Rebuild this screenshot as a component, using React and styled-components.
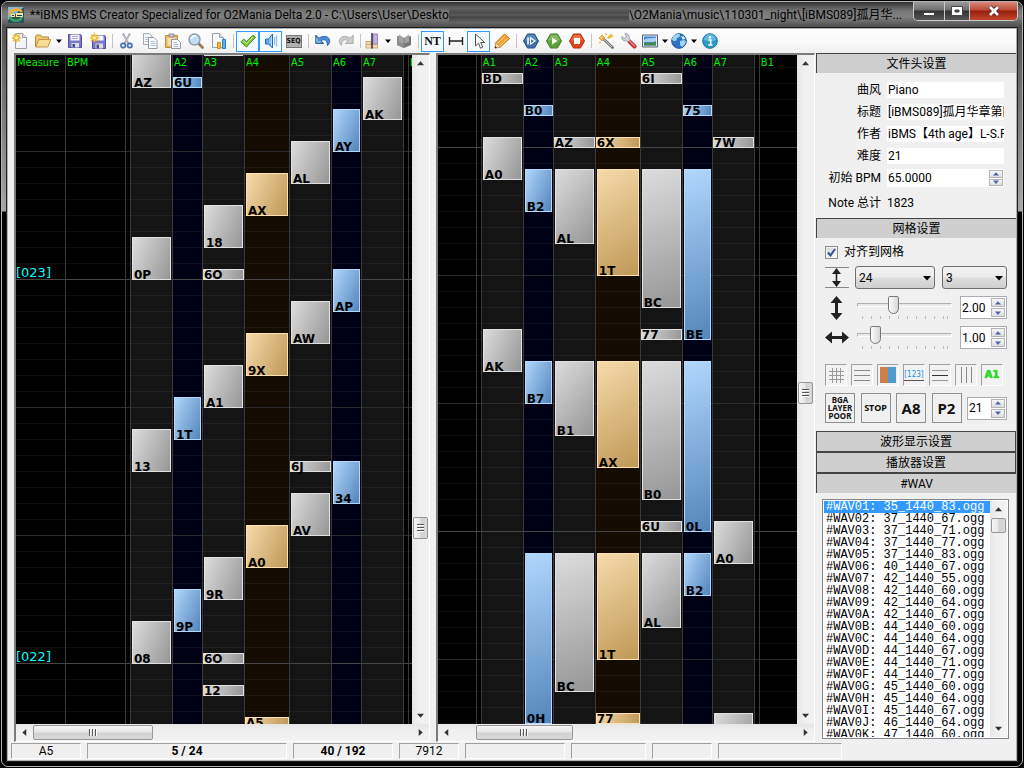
import { useState } from 'react';
import styled, { createGlobalStyle, css } from 'styled-components';

const UI_FONT = "Roboto, 'Open Sans', 'Noto Sans CJK SC', sans-serif";
const CHART_FONT = "'DejaVu Sans', 'Liberation Sans', sans-serif";

/* notes are [top, height, label], measured from the top of the chart */
const TAP = 11;

const LEFT_LANES = [
  {
    name: 'Measure',
    width: 49,
    tone: 'black',
    marks: [
      { y: 224, text: '[023]' },
      { y: 608, text: '[022]' },
    ],
  },
  { name: 'BPM', width: 60, tone: 'black' },
  { name: '', width: 5, tone: 'black' },
  {
    name: 'A1',
    width: 42,
    tone: 'gray',
    notes: [[-10, 43, 'AZ'], [182, 43, '0P'], [374, 43, '13'], [566, 43, '08']],
  },
  {
    name: 'A2',
    width: 30,
    tone: 'blue',
    notes: [[22, TAP, '6U'], [342, 43, '1T'], [534, 43, '9P']],
  },
  {
    name: 'A3',
    width: 42,
    tone: 'gray',
    notes: [
      [-42, 43, ''],
      [150, 43, '18'],
      [214, TAP, '6O'],
      [310, 43, 'A1'],
      [502, 43, '9R'],
      [598, TAP, '6O'],
      [630, TAP, '12'],
    ],
  },
  {
    name: 'A4',
    width: 45,
    tone: 'gold',
    notes: [[118, 43, 'AX'], [278, 43, '9X'], [470, 43, 'A0'], [662, TAP, 'A5']],
  },
  {
    name: 'A5',
    width: 42,
    tone: 'gray',
    notes: [[86, 43, 'AL'], [246, 43, 'AW'], [406, TAP, '6J'], [438, 43, 'AV']],
  },
  {
    name: 'A6',
    width: 30,
    tone: 'blue',
    notes: [[54, 43, 'AY'], [214, 43, 'AP'], [406, 43, '34']],
  },
  { name: 'A7', width: 42, tone: 'gray', notes: [[22, 43, 'AK']] },
  { name: '', width: 5, tone: 'black' },
  { name: 'B1', tone: 'black' },
];

const RIGHT_LANES = [
  { name: 'BPM', width: 60, tone: 'black' },
  { name: '', width: 5, tone: 'black' },
  {
    name: 'A1',
    width: 42,
    tone: 'gray',
    notes: [[18, TAP, 'BD'], [82, 43, 'A0'], [274, 43, 'AK']],
  },
  {
    name: 'A2',
    width: 30,
    tone: 'blue',
    notes: [[50, TAP, 'B0'], [114, 43, 'B2'], [306, 43, 'B7'], [498, 171, '0H']],
  },
  {
    name: 'A3',
    width: 42,
    tone: 'gray',
    notes: [[82, TAP, 'AZ'], [114, 75, 'AL'], [306, 75, 'B1'], [498, 139, 'BC']],
  },
  {
    name: 'A4',
    width: 45,
    tone: 'gold',
    notes: [
      [82, TAP, '6X'],
      [114, 107, '1T'],
      [306, 107, 'AX'],
      [498, 107, '1T'],
      [658, TAP, '77'],
    ],
  },
  {
    name: 'A5',
    width: 42,
    tone: 'gray',
    notes: [
      [18, TAP, '6I'],
      [114, 139, 'BC'],
      [274, TAP, '77'],
      [306, 139, 'B0'],
      [466, TAP, '6U'],
      [498, 75, 'AL'],
    ],
  },
  {
    name: 'A6',
    width: 30,
    tone: 'blue',
    notes: [[50, TAP, '75'], [114, 171, 'BE'], [306, 171, '0L'], [498, 43, 'B2']],
  },
  {
    name: 'A7',
    width: 42,
    tone: 'gray',
    notes: [[82, TAP, '7W'], [466, 43, 'A0'], [658, 43, '']],
  },
  { name: '', width: 5, tone: 'black' },
  { name: 'B1', tone: 'black' },
];

const WAVS = [
  '#WAV01: 35_1440_83.ogg',
  '#WAV02: 37_1440_67.ogg',
  '#WAV03: 37_1440_71.ogg',
  '#WAV04: 37_1440_77.ogg',
  '#WAV05: 37_1440_83.ogg',
  '#WAV06: 40_1440_67.ogg',
  '#WAV07: 42_1440_55.ogg',
  '#WAV08: 42_1440_60.ogg',
  '#WAV09: 42_1440_64.ogg',
  '#WAV0A: 42_1440_67.ogg',
  '#WAV0B: 44_1440_60.ogg',
  '#WAV0C: 44_1440_64.ogg',
  '#WAV0D: 44_1440_67.ogg',
  '#WAV0E: 44_1440_71.ogg',
  '#WAV0F: 44_1440_77.ogg',
  '#WAV0G: 45_1440_60.ogg',
  '#WAV0H: 45_1440_64.ogg',
  '#WAV0I: 45_1440_67.ogg',
  '#WAV0J: 46_1440_64.ogg',
  '#WAV0K: 47_1440_60.ogg',
];

const STATUS = [
  { text: 'A5', width: 70 },
  { text: '5 / 24', width: 200, bold: true },
  { text: '40 / 192', width: 100, bold: true },
  { text: '7912', width: 60 },
  { text: '', width: 100 },
  { text: '', width: 75 },
  { text: '', width: 60 },
  { text: '', width: 124 },
];

const HEADER_FIELDS = [
  ['genre', '曲风', 'Piano'],
  ['title', '标题', '[iBMS089]孤月华章第四章'],
  ['artist', '作者', 'iBMS【4th age】L-S.Piano'],
  ['level', '难度', '21'],
];

/* Icons */
function Icon({ children }) {
  return (
    <svg width="16" height="16" viewBox="0 0 16 16" fill="none" aria-hidden="true">
      {children}
    </svg>
  );
}

function Spark() {
  return (
    <>
      <path
        d="M4.4 0l1 2.6 2.5-1-1 2.4 2.4 1-2.4.9 1 2.4-2.5-1-1 2.5-1-2.5-2.4 1 1-2.4L0 5l2-1L1 1.6l2.400 1z"
        fill="#f6c33b"
        stroke="#e0a020"
        strokeWidth=".4"
      />
      <circle cx="4.5" cy="4.8" r="1.4" fill="#fff6c8" />
    </>
  );
}

const icons = {
  fresh: (
    <Icon>
      <path d="M3.5.5h7l4 4v11h-11z" fill="#f4f5f7" stroke="#9a9ea6" />
      <path d="M10.5.5v4h4" fill="#dfe2e8" stroke="#9a9ea6" />
      <Spark />
    </Icon>
  ),
  open: (
    <Icon>
      <path d="M.5 13.5v-10l1-1.5h4L7 4h6.5v3" fill="#f0c878" stroke="#b98a36" />
      <path d="M.8 14l3-7.5h12l-3 7.5z" fill="#f8dc94" stroke="#c7963e" />
    </Icon>
  ),
  save: (
    <Icon>
      <path d="M1.5 1.5h12l1 1v12h-13z" fill="#7a78c8" stroke="#514f9c" />
      <path d="M3.5 1.5h9v6h-9z" fill="#f3f4fb" />
      <path d="M5 3.5h6M5 5.5h6" stroke="#a9abd0" />
      <path d="M4.5 10H12v4.5H4.5z" fill="#d9dbe6" />
      <path d="M5.5 11H8v3.5H5.5z" fill="#4c4a8c" />
    </Icon>
  ),
  saveAs: (
    <Icon>
      <path d="M2.5 2.5h12l1 1v12h-13z" fill="#7a78c8" stroke="#514f9c" />
      <path d="M5 2.5h8.5v5H5z" fill="#f3f4fb" />
      <path d="M5.5 10.5H13v5H5.5z" fill="#d9dbe6" />
      <path d="M6.5 11.5H9v4H6.5z" fill="#4c4a8c" />
      <Spark />
    </Icon>
  ),
  cut: (
    <Icon>
      <path d="M4 .5l5.500 10M11 .5l-5.500 10" stroke="#9aa0ac" strokeWidth="1.8" />
      <path d="M4.5 2l4 7M10.5 2l-4 7" stroke="#dfe3ea" strokeWidth=".6" />
      <circle cx="4.2" cy="12.5" r="2.2" stroke="#4571b8" strokeWidth="1.7" />
      <circle cx="10.8" cy="12.5" r="2.2" stroke="#4571b8" strokeWidth="1.7" />
    </Icon>
  ),
  copy: (
    <Icon>
      <path d="M1.5.5h6L10 3v8.5H1.5z" fill="#f3f5f8" stroke="#a6acb6" />
      <path d="M3 4.5h5M3 6.5h5M3 8.5h3" stroke="#b8c4d6" />
      <path d="M6.5 4.5H12l3 3v8H6.5z" fill="#fafbfc" stroke="#9299a4" />
      <path d="M8.5 8.5h4M8.5 10.5h5M8.5 12.5h5" stroke="#a9bad2" />
    </Icon>
  ),
  paste: (
    <Icon>
      <path d="M.5 2.5h12v12H.5z" fill="#eeb865" stroke="#c58a35" />
      <path d="M2.5 4.5h8v8h-8z" fill="#f8dfae" />
      <path d="M4 1h5v3H4z" fill="#c6cad2" stroke="#8b9099" />
      <path d="M6.5 6.5h6l3 3v6h-9z" fill="#f7f9fb" stroke="#9299a4" />
      <path d="M8.5 9.5H12M8.5 11.5h5M8.5 13.5h5" stroke="#a9bad2" />
    </Icon>
  ),
  find: (
    <Icon>
      <path d="M10.5 10.5l4 4" stroke="#9c7a54" strokeWidth="2.8" strokeLinecap="round" />
      <circle cx="6.5" cy="6.5" r="5.5" fill="#bfe0f6" stroke="#8f9aa6" strokeWidth="1.4" />
      <path d="M3 6a4 4 0 0 1 5-3" stroke="#fff" strokeWidth="1.5" />
    </Icon>
  ),
  stats: (
    <Icon>
      <path d="M1.5.5h7l4 4v10h-11z" fill="#f6f7f9" stroke="#9a9ea6" />
      <path d="M8.5.5v4h4" fill="#dfe2e8" stroke="#9a9ea6" />
      <path d="M6.5 9.5h3v6h-3z" fill="#ffb53c" stroke="#d98a12" />
      <path d="M11.5 6.5h3v9h-3z" fill="#59b2e8" stroke="#2b83bd" />
    </Icon>
  ),
  check: (
    <Icon>
      <path d="M.8 9l3-2.8 2.7 2.6L13 2.2l2.500 2L6.5 14z" fill="#7ccc3c" stroke="#3f8a1a" />
      <path d="M2.5 9l1.3-1 2.700 2.5L13 4" stroke="#c3ef98" />
    </Icon>
  ),
  speaker: (
    <Icon>
      <path d="M2.5 6h3l4-5v14l-4-4h-3z" fill="#5ea4ea" stroke="#2b68b4" />
      <path d="M7 5v6M8.5 3v10" stroke="#b9dcfa" />
      <path d="M11.5 4v8M13.5 2.5v11" stroke="#8fbdee" strokeWidth="1.2" />
    </Icon>
  ),
  seq: <SeqIcon />,
  undo: (
    <Icon>
      <path
        d="M.8 2v8.5h8L6 8c2-2 5-1.5 6 1l.5 3.5C17 8 14 3.5 9.5 3.5 7 3.5 5 4.3 3.8 5.2z"
        fill="#4f8fd8"
        stroke="#2a5fa8"
      />
      <path d="M2 5v4h4" stroke="#a9cdf2" />
    </Icon>
  ),
  redo: (
    <Icon>
      <path
        d="M15.2 2v8.5h-8L10 8C8 6 5 6.5 4 9l-.5 3.5C-1 8 2 3.5 6.5 3.5c2.500 0 4.5.8 5.700 1.7z"
        fill="#cbcbcb"
        stroke="#adadad"
      />
    </Icon>
  ),
  viewer: (
    <Icon>
      <path d="M8 1h4.500v10H8z" fill="#c3b0e4" stroke="#9a86ca" />
      <path d="M1 8.500h5v3H1zM1 11.500h11.500v3.500H1z" fill="#f6dcb2" stroke="#c9a878" />
      <path d="M7 0v15.500" stroke="#222" strokeWidth="1.4" />
    </Icon>
  ),
  book: (
    <Icon>
      <path d="M1 3l7 2 7-2v9l-7 3-7-3z" fill="#777" />
      <path d="M1 3l7 2v10l-7-3z" fill="#8c8c8c" />
      <path d="M3 1.5l4.500 3v6L3 9zM13 1.500l-4.500 3v6L13 9z" fill="#a2a2a2" />
    </Icon>
  ),
  nt: <NtIcon />,
  range: (
    <Icon>
      <path d="M1.5 4v8M14.5 4v8M2 8h12" stroke="#222" strokeWidth="1.4" />
    </Icon>
  ),
  pointer: (
    <Icon>
      <path d="M4.5 1v12l3-2.8 2 5 2.2-1-2-4.700h4z" fill="#fff" stroke="#555" />
    </Icon>
  ),
  pencil: (
    <Icon>
      <path d="M1 15l1-5.500L10.5 1l5 4.5L6.5 14z" fill="#f6a030" stroke="#c8711a" />
      <path d="M3.5 10.5L11 3M6 13l7.800-7.5" stroke="#ffd894" />
      <path d="M1 15l1-5 4.5 4z" fill="#f5dcb8" stroke="#b88b52" strokeWidth=".6" />
      <path d="M.8 15.2l.5-2.2 1.700 1.7z" fill="#333" />
    </Icon>
  ),
  playHere: (
    <Icon>
      <path d="M4.5 1h7l4 7-4 7h-7l-4-7z" fill="#3d6fa8" stroke="#285386" />
      <path d="M5 2h6l3.2 5.5H1.8z" fill="#6b9ccc" opacity=".6" />
      <path d="M5 4.5v7" stroke="#fff" strokeWidth="1.6" />
      <path d="M7.5 4.8L12 8l-4.500 3.2z" stroke="#fff" strokeWidth="1.2" />
    </Icon>
  ),
  play: (
    <Icon>
      <path d="M4.5 1h7l4 7-4 7h-7l-4-7z" fill="#5fa03c" stroke="#44802a" />
      <path d="M5 2h6l3.2 5.5H1.8z" fill="#9bcb78" opacity=".6" />
      <path d="M6 4.5L11.5 8 6 11.5z" fill="#fff" />
    </Icon>
  ),
  stop: (
    <Icon>
      <path d="M4.5 1h7l4 7-4 7h-7l-4-7z" fill="#e0441c" stroke="#b3300f" />
      <path d="M5 2h6l3.2 5.5H1.8z" fill="#f58a60" opacity=".6" />
      <path d="M5 5h6v6H5z" fill="#fff" />
    </Icon>
  ),
  wand: (
    <Icon>
      <path d="M5 5.5l9.500 9" stroke="#6b6b6b" strokeWidth="2.6" strokeLinecap="round" />
      <path d="M5 5.5l9 8.5" stroke="#e0e0e0" strokeWidth="1" />
      <path d="M1 5l3-3 3 3-3 3z" fill="#f2b640" stroke="#c98a1c" strokeWidth=".6" />
      <path d="M2.5 5L4 3.500" stroke="#fff2b8" />
      <path
        d="M7 .5L9 2M1 10l2-1M10 4.500l3-3 1.500 1.500-3 2z"
        fill="#f8d04a"
        stroke="#f0b429"
        strokeWidth="1.2"
      />
    </Icon>
  ),
  wrench: (
    <Icon>
      <path d="M8.5 8.5l5 5" stroke="#c2323a" strokeWidth="4" strokeLinecap="round" />
      <path d="M9 8.5l4.500 4.5" stroke="#ee8a8e" strokeWidth="1.2" strokeLinecap="round" />
      <path
        d="M.8 3.5l2.700 2 2-2L3.8.8C7 .3 9 2.5 8.3 5.5L9.5 7 7 9 5.5 7.8C2.5 8.5.3 6.5.8 3.5z"
        fill="#cfd2d8"
        stroke="#8c9098"
        strokeWidth=".8"
      />
    </Icon>
  ),
  image: (
    <Icon>
      <path d="M.5 2h15v12H.5z" fill="#e9edf2" stroke="#53606f" />
      <path d="M2 3.5h12v9H2z" fill="#3f86d4" />
      <path d="M2 7c4-3 7-1 12-2.500V9H2z" fill="#a8d0f2" />
      <path d="M2 12.5v-3c4 1 8 1 12-1.500v4.5z" fill="#3f8a4c" />
    </Icon>
  ),
  globe: (
    <Icon>
      <circle cx="8" cy="8" r="7.3" fill="#2c74c0" stroke="#1d5292" />
      <path
        d="M3 2.5C5 1 8 .8 9 1.500L8.5 4 6 5l-.5 2.5L3 8 1 7c0-2 1-3.5 2-4.500zM9 8l4-1 1.800 1c0 3-2 5-3.800 6L9 12z"
        fill="#9fd3f2"
      />
      <path d="M10 3l3 .5 1.500 2.5-3 .5z" fill="#d5eefb" />
    </Icon>
  ),
  info: (
    <Icon>
      <circle cx="8" cy="8" r="7.3" fill="#2b9cc9" stroke="#196f98" />
      <path d="M2 7a6 6 0 0 1 12 0c-4 1.5-8 1.5-12 0z" fill="#7fd0ec" opacity=".6" />
      <path d="M6.5 7h2.200v5M6.3 12h4.2" stroke="#fff" strokeWidth="1.6" />
      <circle cx="8" cy="4.2" r="1.2" fill="#fff" />
    </Icon>
  ),
};

const TOOLS = [
  ['fresh', 'New'],
  ['open', 'Open', 'split'],
  ['save', 'Save'],
  ['saveAs', 'Save as'],
  null,
  ['cut', 'Cut'],
  ['copy', 'Copy'],
  ['paste', 'Paste'],
  ['find', 'Find'],
  ['stats', 'Statistics'],
  null,
  ['check', 'Error check', 'on'],
  ['speaker', 'Preview on click', 'on'],
  ['seq', 'Sequence'],
  null,
  ['undo', 'Undo'],
  ['redo', 'Redo'],
  null,
  ['viewer', 'Slash objects', 'menu'],
  ['book', 'My O2'],
  null,
  ['nt', 'NT input', 'on'],
  ['range', 'Time select'],
  ['pointer', 'Select', 'on'],
  ['pencil', 'Write'],
  null,
  ['playHere', 'Play from here'],
  ['play', 'Play'],
  ['stop', 'Stop'],
  null,
  ['wand', 'Wizard'],
  ['wrench', 'Options'],
  ['image', 'Visual options', 'menu'],
  ['globe', 'Language', 'menu'],
  ['info', 'About'],
];

function SeqIcon() {
  return <SeqBadge>SEQ</SeqBadge>;
}

function NtIcon() {
  return <NtMark>NT</NtMark>;
}

function Caret({ dir = 'down', color = '#333', w = 7 }) {
  const turn = { down: 0, left: 90, up: 180, right: 270 }[dir];
  return (
    <svg width={w} height={w} viewBox="0 0 8 8" aria-hidden="true">
      <path d="M0 2h8L4 6.5z" fill={color} transform={`rotate(${turn} 4 4)`} />
    </svg>
  );
}

function ToolBar() {
  return (
    <Tools>
      {TOOLS.map((tool, i) => {
        if (!tool) return <ToolSeparator key={i} />;
        const [icon, label, kind] = tool;
        return (
          <ToolButton key={i} type="button" aria-label={label}>
            <ToolFace $kind={kind}>{icons[icon]}</ToolFace>
            {(kind === 'split' || kind === 'menu') && (
              <ToolArrow>
                <Caret color="#000" w={6} />
              </ToolArrow>
            )}
          </ToolButton>
        );
      })}
    </Tools>
  );
}

function ScrollBar({ vertical, before, after, length }) {
  return (
    <Track $vertical={vertical}>
      <ScrollArrow>
        <Caret dir={vertical ? 'up' : 'left'} />
      </ScrollArrow>
      <Spacer $grow={before} />
      <Thumb $vertical={vertical} $length={length}>
        {length > 16 && (
          <>
            <Grip $vertical={vertical} />
            <Grip $vertical={vertical} />
            <Grip $vertical={vertical} />
          </>
        )}
      </Thumb>
      <Spacer $grow={after} />
      <ScrollArrow>
        <Caret dir={vertical ? 'down' : 'right'} />
      </ScrollArrow>
    </Track>
  );
}

function Editor({ lanes, share, beat, measure, scroll = 0, vBar, hBar }) {
  return (
    <EditorPane $share={share}>
      <ChartRow>
        <Chart>
          <Lanes $scroll={scroll}>
            {lanes.map((lane, i) => (
              <Lane
                key={i}
                $width={lane.width}
                $tone={lane.tone}
                $beat={beat}
                $measure={measure}
              >
                {lane.name && <LaneName>{lane.name}</LaneName>}
                {lane.notes?.map(([y, h, text]) => (
                  <Note key={y} $y={y} $h={h} $tone={lane.tone}>
                    {text}
                  </Note>
                ))}
                {lane.marks?.map((mark) => (
                  <MeasureMark key={mark.y} $y={mark.y}>
                    {mark.text}
                  </MeasureMark>
                ))}
              </Lane>
            ))}
          </Lanes>
        </Chart>
        <ScrollBar vertical {...vBar} />
      </ChartRow>
      <ScrollBar {...hBar} />
    </EditorPane>
  );
}

function Spinner({ label, value, width, flat, id }) {
  return (
    <SpinBox $width={width} $flat={flat}>
      <SpinInput id={id} aria-label={label} defaultValue={value} />
      <SpinButtons>
        <SpinButton type="button" aria-label={`${label} +`}>
          <Caret dir="up" color="#4a64a8" w={6} />
        </SpinButton>
        <SpinButton type="button" aria-label={`${label} -`}>
          <Caret color="#4a64a8" w={6} />
        </SpinButton>
      </SpinButtons>
    </SpinBox>
  );
}

function Combo({ label, value, width }) {
  return (
    <ComboBox $width={width}>
      <ComboSelect aria-label={label} defaultValue={value}>
        <option>{value}</option>
      </ComboSelect>
      <ComboArrow>
        <Caret color="#000" w={8} />
      </ComboArrow>
    </ComboBox>
  );
}

function ZoomRow({ label, icon, position, value }) {
  return (
    <GridRow>
      {icon}
      <SliderBox>
        <Slider type="range" aria-label={label} defaultValue={position} />
        <Ticks />
      </SliderBox>
      <Spinner label={`${label} value`} value={value} width={47} />
    </GridRow>
  );
}

const ARROW_SNAP = (
  <svg width="24" height="22" viewBox="0 0 24 22" aria-hidden="true">
    <path d="M0 .5h24M0 20.5h24" stroke="#888" />
    <path d="M11.5 4v13" stroke="#222" strokeWidth="1.6" />
    <path d="M11.5 1l4.5 6H7zM11.5 20l4.500-6H7z" fill="#222" />
  </svg>
);
const ARROW_V = (
  <svg width="24" height="24" viewBox="0 0 24 24" aria-hidden="true">
    <path d="M11.5 5v14" stroke="#222" strokeWidth="3" />
    <path d="M11.5 0l6 7h-12zM11.5 24l6-7h-12z" fill="#222" />
  </svg>
);
const ARROW_H = (
  <svg width="24" height="24" viewBox="0 0 24 24" aria-hidden="true">
    <path d="M5 11.5h14" stroke="#222" strokeWidth="3" />
    <path d="M0 11.5l7-6v12zM24 11.5l-7-6v12z" fill="#222" />
  </svg>
);

const TOGGLES = [
  ['Grid', <path key="p" d="M4.5 1v15M8.5 1v15M12.5 1v15M1 4.5h15M1 8.5h15M1 12.5h15" stroke="#999" />],
  ['Sub grid', <path key="p" d="M0 3.5h16M0 8.5h16M0 13.5h16" stroke="#888" />],
  [
    'Background',
    <g key="p">
      <path d="M0 0h8v16H0z" fill="#c8804c" />
      <path d="M8 0h8v16H8z" fill="#4f9acb" />
    </g>,
  ],
  ['Measure index', null, '[123]'],
  [
    'Measure line',
    <g key="p">
      <path d="M0 3.5h16M0 13.5h16" stroke="#999" />
      <path d="M0 8.5h16" stroke="#333" strokeWidth="1" />
    </g>,
  ],
  ['Vertical line', <path key="p" d="M3.5 0v16M8.5 0v16M13.5 0v16" stroke="#888" />],
  ['Column caption', null, 'A1'],
];

function GridSettings() {
  const [snap, setSnap] = useState(true);

  return (
    <GridBody>
      <SnapLabel>
        <SnapCheck type="checkbox" checked={snap} onChange={() => setSnap(!snap)} />
        <SnapTick>
          {snap && (
            <svg width="9" height="9" viewBox="0 0 9 9" aria-hidden="true">
              <path d="M1 4.5l2.500 3L8 1" stroke="#33528f" strokeWidth="2" fill="none" />
            </svg>
          )}
        </SnapTick>
        对齐到网格
      </SnapLabel>
      <GridRow>
        {ARROW_SNAP}
        <ComboPair>
          <Combo label="Grid division" value="24" width={80} />
          <Combo label="Sub division" value="3" width={65} />
        </ComboPair>
      </GridRow>
      <ZoomRow label="Grid height" icon={ARROW_V} position={36} value="2.00" />
      <ZoomRow label="Grid width" icon={ARROW_H} position={15} value="1.00" />
      <ToggleRow>
        {TOGGLES.map(([label, art, text]) => (
          <Toggle key={label} type="button" aria-label={label} aria-pressed="true">
            {art && <Icon>{art}</Icon>}
            {text === 'A1' && <CaptionMark>A1</CaptionMark>}
            {text === '[123]' && <IndexMark>[123]</IndexMark>}
          </Toggle>
        ))}
      </ToggleRow>
      <LayerRow>
        <LayerButton type="button" $size={8}>
          BGA
          <br />
          LAYER
          <br />
          POOR
        </LayerButton>
        <LayerButton type="button" $size={9}>
          STOP
        </LayerButton>
        <LayerButton type="button" $size={15}>
          A8
        </LayerButton>
        <LayerButton type="button" $size={15}>
          P2
        </LayerButton>
        <Spinner label="B columns" value="21" width={40} />
      </LayerRow>
    </GridBody>
  );
}

function HeaderSettings() {
  return (
    <Form>
      {HEADER_FIELDS.map(([id, label, value]) => (
        <Field key={id}>
          <FieldLabel htmlFor={id}>{label}</FieldLabel>
          <FieldInput id={id} defaultValue={value} />
        </Field>
      ))}
      <Field>
        <FieldLabel htmlFor="bpm">初始 BPM</FieldLabel>
        <Spinner id="bpm" label="BPM" value="65.0000" flat />
      </Field>
      <Field $tall>
        <FieldLabel as="span">Note 总计</FieldLabel>
        <span>1823</span>
      </Field>
    </Form>
  );
}

export default function App() {
  const [selected, setSelected] = useState(0);

  return (
    <Desktop>
      <GlobalStyle />
      <Window>
        <TitleBar>
          <AppLogo>
            <svg width="16" height="16" viewBox="0 0 16 16" aria-hidden="true">
              <path d="M0 0h16v16H0z" fill="#2c4f60" />
              <path d="M0 0h16L0 13z" fill="#8fb6c4" />
              <path d="M2 8c0-6 9-7 12-3" stroke="#f0b030" strokeWidth="2.5" fill="none" />
              <path d="M2 10c2 5 10 5 12 0" stroke="#36a35a" strokeWidth="2.5" fill="none" />
              <path d="M3 7h4v3H3zM8 6h7v4H8z" fill="#f5e9a0" />
              <path d="M4 8.5h2M9 8.5h5" stroke="#234" />
            </svg>
          </AppLogo>
          <TitleText>
            **iBMS BMS Creator Specialized for O2Mania Delta 2.0 - C:\Users\User\Deskto
          </TitleText>
          <Smear />
          <TitleText>\O2Mania\music\110301_night\[iBMS089]孤月华...</TitleText>
          <Captions>
            <CaptionButton type="button" aria-label="Minimize" $width={31}>
              <svg width="12" height="14" viewBox="0 0 12 14" aria-hidden="true">
                <path d="M.5 8.5h11v3H.5z" fill="#fff" stroke="#444" />
              </svg>
            </CaptionButton>
            <CaptionButton type="button" aria-label="Maximize" $width={25}>
              <svg width="12" height="10" viewBox="0 0 12 10" aria-hidden="true">
                <path
                  d="M.5.5h11v9H.5zM4 4v2h4V4z"
                  fill="#fff"
                  fillRule="evenodd"
                  stroke="#444"
                />
              </svg>
            </CaptionButton>
            <CaptionButton type="button" aria-label="Close" $width={47} $close>
              <svg width="14" height="12" viewBox="0 0 14 12" aria-hidden="true">
                <path d="M3 2l8 8M11 2l-8 8" stroke="#4a2020" strokeWidth="4.5" />
                <path d="M3 2l8 8M11 2l-8 8" stroke="#fff" strokeWidth="2.8" />
              </svg>
            </CaptionButton>
          </Captions>
        </TitleBar>
        <Client>
          <ToolBar />
          <Main>
            <Editor
              lanes={LEFT_LANES}
              share={416}
              beat={96}
              measure={224}
              vBar={{ before: 445, after: 168, length: 22 }}
              hBar={{ before: 0, after: 1, length: 120 }}
            />
            <Splitter />
            <Editor
              lanes={RIGHT_LANES}
              share={379}
              beat={92}
              measure={92}
              scroll={22}
              vBar={{ before: 310, after: 303, length: 22 }}
              hBar={{ before: 21, after: 224, length: 97 }}
            />
            <Sidebar>
              <SectionHead type="button" $open>
                文件头设置
              </SectionHead>
              <HeaderSettings />
              <SectionHead type="button" $open>
                网格设置
              </SectionHead>
              <GridSettings />
              <SectionHead type="button">波形显示设置</SectionHead>
              <SectionHead type="button">播放器设置</SectionHead>
              <SectionHead type="button" $open>
                #WAV
              </SectionHead>
              <WavBox>
                <WavList role="listbox" aria-label="#WAV">
                  {WAVS.map((wav, i) => (
                    <WavItem
                      key={wav}
                      role="option"
                      aria-selected={i === selected}
                      $selected={i === selected}
                      onClick={() => setSelected(i)}
                    >
                      {wav}
                    </WavItem>
                  ))}
                </WavList>
                <ScrollBar vertical before={0} after={1} length={15} />
              </WavBox>
            </Sidebar>
          </Main>
          <StatusBar>
            {STATUS.map((cell, i) => (
              <StatusCell key={i} $width={cell.width} $bold={cell.bold}>
                {cell.text}
              </StatusCell>
            ))}
          </StatusBar>
        </Client>
      </Window>
    </Desktop>
  );
}

/* Styled Components */
const GlobalStyle = createGlobalStyle`
  * {
    box-sizing: border-box;
  }

  body {
    margin: 0;
    background: #000;
    color: #000;
    font: 12px/16px ${UI_FONT};
  }

  button,
  input,
  select {
    margin: 0;
    padding: 0;
    color: inherit;
    font: inherit;
  }

  svg {
    display: block;
    flex: none;
  }
`;

const Desktop = styled.div`
  display: flex;
  height: 100vh;
  padding: 1px;
  overflow: hidden;
`;

const Window = styled.div`
  display: flex;
  flex: 1;
  flex-direction: column;
  min-width: 0;
  padding: 0 4px 4px;
  background: linear-gradient(#555 0, #555 30px, #a8a5a5 209px, #000 210px);
  border: 1px solid #b4b4b4;
  border-radius: 7px;
`;

const TitleBar = styled.header`
  display: flex;
  align-items: center;
  height: 26px;
  margin: 0 -4px;
  padding: 0 4px 0 6px;
  background: linear-gradient(
    #2c2c2c 0,
    #4a4a4a 3px,
    #767676 9px,
    #808080 15px,
    #666 20px,
    #484848 26px
  );
  border-radius: 6px 6px 0 0;
`;

const AppLogo = styled.span`
  display: flex;
  margin-right: 6px;
`;

const TitleText = styled.span`
  color: #000;
  font-size: 12px;
  line-height: 16px;
  white-space: pre;
`;

const Smear = styled.span`
  flex: 1 1 0;
  min-width: 0;
  height: 14px;
  background: linear-gradient(#636363, #4a4a4a 5px, #5c5c5c 7px, #444 9px, #606060);
`;

const Captions = styled.div`
  display: flex;
  align-self: flex-start;
  height: 19px;
  margin-left: 11px;
  overflow: hidden;
  border: 1px solid #c8c8c8;
  border-top: none;
  border-radius: 0 0 5px 5px;
`;

const CaptionButton = styled.button`
  display: flex;
  align-items: center;
  justify-content: center;
  width: ${({ $width }) => $width}px;
  background: linear-gradient(#9a9a9a, #6e6e6e 8px, #333 9px, #565656);
  border: none;
  border-right: 1px solid #c8c8c8;

  ${({ $close }) =>
    $close &&
    css`
      background: linear-gradient(#d6897c, #bf4a38 8px, #96200e 9px, #c4452a);
      border-right: none;
    `}
`;

const Client = styled.div`
  display: flex;
  flex: 1;
  flex-direction: column;
  min-height: 0;
  margin: 0 1px 1px;
  background: #f0f0f0;
  border: 1px solid #b0b0b0;
  outline: 1px solid #1c1c1c;
`;

const Tools = styled.div`
  display: flex;
  flex: none;
  align-items: center;
  height: 24px;
  background: linear-gradient(#fdfdfd, #fafafa 50%, #efefef);
`;

const ToolButton = styled.button`
  display: flex;
  align-items: center;
  height: 21px;
  background: none;
  border: none;
`;

const ToolFace = styled.span`
  display: flex;
  align-items: center;
  justify-content: center;
  width: ${({ $kind }) => ($kind === 'menu' ? 20 : 23)}px;
  height: 21px;

  ${({ $kind }) =>
    $kind === 'on' &&
    css`
      background: #f5faff;
      border: 1px solid #3399ff;
    `}
`;

const ToolArrow = styled.span`
  display: flex;
  justify-content: center;
  width: 9px;
`;

const ToolSeparator = styled.span`
  width: 1px;
  height: 14px;
  margin: 0 2px 0 3px;
  background: #c4c4c4;
`;

const SeqBadge = styled.span`
  width: 16px;
  height: 13px;
  background: #b0b0b0;
  border: 1px solid #777;
  color: #111;
  font: 700 7px/11px 'DejaVu Sans Condensed', sans-serif;
  text-align: center;
`;

const NtMark = styled.span`
  color: #111;
  font: 700 12px/14px 'Liberation Serif', serif;
`;

const Main = styled.main`
  display: flex;
  flex: 1;
  min-height: 0;
  padding-left: 6px;
`;

const EditorPane = styled.section`
  display: flex;
  flex: ${({ $share }) => $share} 1 0;
  flex-direction: column;
  min-width: 0;
  border: 2px solid #7c7c7c;
  border-right: 1px solid #fff;
  border-bottom: 1px solid #fff;
`;

const Splitter = styled.div`
  flex: none;
  width: 6px;
`;

const ChartRow = styled.div`
  display: flex;
  flex: 1;
  min-height: 0;
`;

const Chart = styled.div`
  display: flex;
  flex: 1;
  min-width: 0;
  overflow: hidden;
  background: #000;
`;

const Lanes = styled.div`
  display: flex;
  flex: 1;
  min-width: 0;
  margin-left: ${({ $scroll }) => -$scroll}px;
`;

const laneFill = {
  black: '#000',
  gray: '#141414',
  blue: '#000014',
  gold: '#140c00',
};

/* sub grid every 16px, beat every 128px, measure every 384px */
const Lane = styled.div`
  position: relative;
  flex: ${({ $width }) => ($width ? 'none' : '1 1 0')};
  width: ${({ $width }) => ($width ? `${$width}px` : 'auto')};
  min-width: 0;
  overflow: hidden;
  background-color: ${({ $tone }) => laneFill[$tone]};
  background-image: linear-gradient(#464646 1px, transparent 1px),
    linear-gradient(#2c2c2c 1px, transparent 1px),
    linear-gradient(rgba(255, 255, 255, 0.05) 1px, transparent 1px);
  background-position: 0 ${({ $measure }) => $measure}px, 0 ${({ $beat }) => $beat}px,
    0 ${({ $beat }) => $beat}px;
  background-size: 100% 384px, 100% 128px, 100% 16px;
  border-left: 1px solid #3a3a3a;

  &:first-child {
    border-left: none;
  }
`;

const LaneName = styled.span`
  position: absolute;
  top: 0;
  left: 1px;
  color: #00f000;
  font: 11px/15px 'DejaVu Sans Condensed', 'DejaVu Sans', sans-serif;
`;

const MeasureMark = styled.span`
  position: absolute;
  top: ${({ $y }) => $y - 15}px;
  left: 0;
  color: #00ffff;
  font: 13px/17px ${CHART_FONT};
`;

const noteColors = {
  gray: ['#dcdcdc', '#969696', '#e0e0e0'],
  blue: ['#b0d6fc', '#5486ba', '#b4d8fc'],
  gold: ['#f6daaa', '#bf9856', '#ffe0b0'],
};

const slant = (h) => {
  if (h <= 11) return 100;
  if (h <= 43) return 112;
  if (h <= 75) return 132;
  return h <= 107 ? 148 : 160;
};

const Note = styled.div`
  position: absolute;
  top: ${({ $y }) => $y}px;
  right: ${({ $h }) => ($h > TAP ? 1 : 0)}px;
  left: ${({ $h }) => ($h > TAP ? 1 : 0)}px;
  display: flex;
  align-items: flex-end;
  height: ${({ $h }) => $h}px;
  padding-left: ${({ $h }) => ($h > TAP ? 1 : 0)}px;
  color: #000;
  font: 700 12px/8px ${CHART_FONT};
  background: linear-gradient(
    ${({ $h, $tone }) => `${slant($h)}deg, ${noteColors[$tone][0]}, ${noteColors[$tone][1]}`}
  );
  border: 1px solid ${({ $tone }) => noteColors[$tone][2]};
`;

const Track = styled.div`
  display: flex;
  flex: none;
  flex-direction: ${({ $vertical }) => ($vertical ? 'column' : 'row')};
  align-items: center;
  ${({ $vertical }) => ($vertical ? 'width' : 'height')}: 17px;
  background: linear-gradient(
    ${({ $vertical }) => ($vertical ? '90deg' : '180deg')},
    #e6e6e6,
    #f0f0f0 40%,
    #f2f2f2
  );
`;

const ScrollArrow = styled.span`
  display: flex;
  flex: none;
  align-items: center;
  justify-content: center;
  width: 17px;
  height: 17px;
`;

const Spacer = styled.span`
  flex: ${({ $grow }) => $grow} 1 0;
`;

const Thumb = styled.div`
  display: flex;
  flex: none;
  flex-direction: ${({ $vertical }) => ($vertical ? 'column' : 'row')};
  gap: 1px;
  align-items: center;
  justify-content: center;
  width: ${({ $vertical, $length }) => ($vertical ? 15 : $length)}px;
  height: ${({ $vertical, $length }) => ($vertical ? $length : 15)}px;
  background: linear-gradient(
    ${({ $vertical }) => ($vertical ? '90deg' : '180deg')},
    #f5f5f5,
    #e6e6e6 48%,
    #d2d2d4 52%,
    #d8d8da
  );
  border: 1px solid #979797;
  border-radius: 2px;
`;

const Grip = styled.span`
  width: ${({ $vertical }) => ($vertical ? 7 : 2)}px;
  height: ${({ $vertical }) => ($vertical ? 2 : 7)}px;
  background: linear-gradient(
    ${({ $vertical }) => ($vertical ? '180deg' : '90deg')},
    #555 50%,
    #fff 50%
  );
`;

const Sidebar = styled.aside`
  display: flex;
  flex: none;
  flex-direction: column;
  width: 200px;
  margin-left: 1px;
`;

const SectionHead = styled.button`
  flex: none;
  height: 21px;
  color: #000;
  line-height: 18px;
  background: #cfcfcf;
  border: 1px solid #444;

  ${({ $open }) =>
    $open &&
    css`
      height: 20px;
      border-right: none;
      border-bottom: none;
    `}
`;

const Form = styled.div`
  padding: 6px 12px 1px 0;
`;

const Field = styled.div`
  display: flex;
  gap: 6px;
  align-items: center;
  height: ${({ $tall }) => ($tall ? 28 : 22)}px;
`;

const FieldLabel = styled.label`
  flex: none;
  width: 65px;
  text-align: right;
`;

const FieldInput = styled.input`
  flex: 1;
  min-width: 0;
  height: 16px;
  padding-left: 1px;
  background: #fff;
  border: none;
  outline: none;
`;

const SpinBox = styled.div`
  display: flex;
  flex: ${({ $width }) => ($width ? 'none' : '1')};
  width: ${({ $width }) => ($width ? `${$width}px` : 'auto')};
  min-width: 0;
  height: ${({ $flat }) => ($flat ? 18 : 23)}px;
  padding: 1px;
  background: #fff;
  border: ${({ $flat }) => ($flat ? 'none' : '1px solid #abadb3')};
`;

const SpinInput = styled.input`
  flex: 1;
  width: 0;
  min-width: 0;
  background: none;
  border: none;
  outline: none;
`;

const SpinButtons = styled.span`
  display: flex;
  flex: none;
  flex-direction: column;
  gap: 1px;
  width: 14px;
`;

const SpinButton = styled.button`
  display: flex;
  flex: 1;
  align-items: center;
  justify-content: center;
  min-height: 0;
  background: linear-gradient(#f6f6f6, #dedede);
  border: 1px solid #b4b4b8;
`;

const GridBody = styled.div`
  display: flex;
  flex-direction: column;
  gap: 7px;
  padding: 7px 9px 8px;
`;

const SnapLabel = styled.label`
  position: relative;
  display: flex;
  gap: 6px;
  align-items: center;
  height: 14px;
`;

const SnapCheck = styled.input`
  position: absolute;
  width: 13px;
  height: 13px;
  opacity: 0;
`;

const SnapTick = styled.span`
  display: flex;
  align-items: center;
  justify-content: center;
  width: 13px;
  height: 13px;
  background: linear-gradient(135deg, #cfd3dc, #fff);
  border: 1px solid #8e8f8f;
  box-shadow: inset 0 0 0 1px #f4f4f4;
`;

const GridRow = styled.div`
  display: flex;
  align-items: center;
  justify-content: space-between;
  height: 23px;
`;

const ComboPair = styled.div`
  display: flex;
  gap: 7px;
`;

const ComboBox = styled.div`
  position: relative;
  width: ${({ $width }) => $width}px;
  height: 23px;
`;

const ComboSelect = styled.select`
  width: 100%;
  height: 100%;
  padding-left: 3px;
  appearance: none;
  background: linear-gradient(#f2f2f2, #ebebeb 48%, #dddddd 52%, #cfcfcf);
  border: 1px solid #707070;
  border-radius: 3px;
`;

const ComboArrow = styled.span`
  position: absolute;
  top: 8px;
  right: 4px;
  pointer-events: none;
`;

const SliderBox = styled.div`
  display: flex;
  flex-direction: column;
  gap: 2px;
  width: 95px;
`;

const Slider = styled.input`
  width: 95px;
  height: 18px;
  appearance: none;
  background: none;

  &::-webkit-slider-runnable-track {
    height: 4px;
    background: #e7eaea;
    border: 1px solid #b0b0b0;
    border-right-color: #fff;
    border-bottom-color: #fff;
  }

  &::-webkit-slider-thumb {
    width: 11px;
    height: 18px;
    margin-top: -8px;
    appearance: none;
    background: linear-gradient(90deg, #fdfdfd, #d6d6d8);
    border: 1px solid #777;
    border-radius: 2px 2px 6px 6px;
  }
`;

const Ticks = styled.span`
  height: 3px;
  margin: 0 4px 0 5px;
  background: repeating-linear-gradient(90deg, #bbb 0 1px, transparent 1px 9px);
  border-right: 1px solid #bbb;
`;

const ToggleRow = styled.div`
  display: flex;
  gap: 4px;
  margin-top: 8px;
`;

const Toggle = styled.button`
  display: flex;
  align-items: center;
  justify-content: center;
  width: 22px;
  height: 22px;
  background: #f2f2f2;
  border: 1px solid #a0a0a0;
  border-right-color: #fff;
  border-bottom-color: #fff;
`;

const IndexMark = styled.span`
  color: #1490f0;
  font: 8px/11px 'DejaVu Sans Condensed', sans-serif;
  border-bottom: 1px solid #555;
`;

const CaptionMark = styled.span`
  color: #2be020;
  font: 700 11px/12px 'DejaVu Sans Condensed', sans-serif;
  text-shadow: 0 0 1px #0a9a0a;
`;

const LayerRow = styled.div`
  display: flex;
  align-items: center;
  justify-content: space-between;
`;

const LayerButton = styled.button`
  width: 30px;
  height: 30px;
  overflow: hidden;
  color: #111;
  font: 700 ${({ $size }) => `${$size}px/8px`} 'Noto Sans', sans-serif;
  text-align: center;
  background: #f0f0f0;
  border: 1px solid #909090;
`;

const WavBox = styled.div`
  display: flex;
  flex: 1;
  min-height: 0;
  margin: 6px 7px 3px 6px;
  padding: 1px;
  overflow: hidden;
  background: #fff;
  border: 1px solid #828790;
`;

const WavList = styled.ul`
  flex: 1;
  min-width: 0;
  margin: 0;
  padding: 0;
  overflow: hidden;
  list-style: none;
`;

const WavItem = styled.li`
  height: 12px;
  padding-left: 2px;
  font: 12px/12px 'Liberation Mono', 'DejaVu Sans Mono', monospace;
  white-space: nowrap;
  cursor: default;

  ${({ $selected }) =>
    $selected &&
    css`
      color: #fff;
      background: #3399ff;
    `}
`;

const StatusBar = styled.footer`
  display: flex;
  flex: none;
  gap: 6px;
  height: 18px;
  padding: 1px 3px;
`;

const StatusCell = styled.span`
  flex: 0 1 ${({ $width }) => $width}px;
  font-weight: ${({ $bold }) => ($bold ? 700 : 400)};
  line-height: 15px;
  text-align: center;
  border: 1px solid #a0a0a0;
  border-right-color: #fff;
  border-bottom-color: #fff;
`;
